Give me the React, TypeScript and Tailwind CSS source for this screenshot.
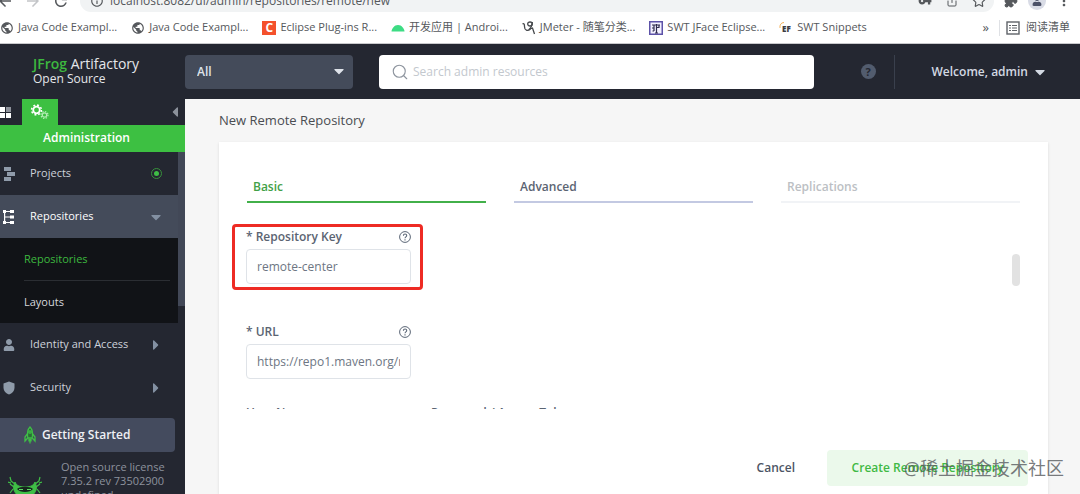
import type { ReactNode } from "react";
import { Puzzle, Search, Share, Star } from "lucide-react";
import { FaCaretDown, FaCaretLeft, FaCaretRight, FaUser } from "react-icons/fa";
import { MdArrowBack, MdArrowForward, MdInfoOutline, MdMoreVert, MdPublic, MdRefresh, MdVpnKey } from "react-icons/md";

type Bookmark = { label: string; icon: ReactNode };

const BOOKMARKS: Bookmark[] = [
  { label: "Java Code Exampl...", icon: <MdPublic className="size-3.5 text-[#55585c]" /> },
  { label: "Java Code Exampl...", icon: <MdPublic className="size-3.5 text-[#55585c]" /> },
  {
    label: "Eclipse Plug-ins R...",
    icon: (
      <span className="flex size-3.5 items-center justify-center bg-[#f4512c] text-[12px] leading-none font-bold text-white">
        C
      </span>
    ),
  },
  { label: "开发应用 | Androi...", icon: <AndroidIcon /> },
  { label: "JMeter - 随笔分类...", icon: <PenIcon /> },
  { label: "SWT JFace Eclipse...", icon: <FrameIcon /> },
  { label: "SWT Snippets", icon: <EfIcon /> },
];

function AndroidIcon() {
  return (
    <svg viewBox="0 0 14 14" className="size-3.5">
      <path d="M.5 10.5C.8 7.500 3.200 4 7 4s6.200 3.500 6.500 6.500z" fill="#3ddc84" />
    </svg>
  );
}

function PenIcon() {
  return (
    <svg viewBox="0 0 14 14" className="size-3.5" fill="none" stroke="#45484c" strokeWidth="1.300">
      <path d="M.5 3c1.500-1 2 .3 2 2.500 0 4 3 5 6 2.500" />
      <ellipse cx="8" cy="3" rx="2.300" ry="2" />
      <path d="M10.300 1c-.5 3 0 5-3.300 7.500M6.500 8.500l4-1.500 2 6" />
    </svg>
  );
}

function FrameIcon() {
  return (
    <svg viewBox="0 0 14 14" className="size-3.5" fill="none">
      <rect x=".75" y=".75" width="12.500" height="12.500" fill="#f3f1ff" stroke="#5d52a8" strokeWidth="1.500" />
      <path d="M3 4h8M5 4v6M7.500 3v9M3 7h2M7.500 6.500H10V4M6 12h3M3.500 10H5" stroke="#2e2a4d" strokeWidth="1.200" />
    </svg>
  );
}

function EfIcon() {
  return (
    <svg viewBox="0 0 14 14" className="size-3.5">
      <path d="M1 7C.5 4 2 1.500 5 1.500" fill="none" stroke="#f5b35c" strokeWidth="1" />
      <text x="3" y="10.500" fontSize="8" fontWeight="800" fill="#3c3c42" fontFamily="Open Sans, sans-serif">
        EF
      </text>
    </svg>
  );
}

function ReadingListIcon() {
  return (
    <svg viewBox="0 0 14 14" className="size-3.5" fill="none" stroke="#5f6368">
      <rect x="1" y="1" width="12" height="12" strokeWidth="1.400" />
      <path d="M3 4.500h2M6 4.500h5M3 7h2M6 7h5M3 9.500h2M6 9.500h5" strokeWidth="1.200" />
    </svg>
  );
}

function GearsIcon() {
  return (
    <svg viewBox="0 0 20 16" className="h-4 w-5" fill="none">
      <circle cx="6.500" cy="6" r="3.300" stroke="#fff" strokeWidth="1.800" />
      <circle cx="6.500" cy="6" r="4.900" stroke="#fff" strokeWidth="1.600" strokeDasharray="1.900 1.950" />
      <circle cx="14.500" cy="11" r="2.200" stroke="#b5ecb6" strokeWidth="1.200" />
      <circle cx="14.500" cy="11" r="3.500" stroke="#b5ecb6" strokeWidth="1.200" strokeDasharray="1.400 1.350" />
    </svg>
  );
}

function ProjectsIcon() {
  return (
    <svg viewBox="0 0 12 16" className="h-4 w-3" fill="#8f9baa">
      <path d="M1 1h7v4H1zM4 6h8v4H4zM1 11h7v4H1z" />
    </svg>
  );
}

function RepositoriesIcon() {
  return (
    <svg viewBox="0 0 12 16" className="h-4 w-3" fill="#fff">
      <path d="M0 1h3v3H0zM7 1h4v3H7zM7 6.500h4v3H7zM7 12h4v3H7zM0 12h3v3H0z" />
      <path d="M1 2h1.200v12H1zM2 2h6v1H2zM2 7.500h6v1H2zM2 13h6v1H2z" />
    </svg>
  );
}

function ShieldIcon() {
  return (
    <svg viewBox="0 0 12 14" className="h-3.5 w-3" fill="#8f9baa">
      <path d="M6 .5l5.500 2v4c0 3.500-2.500 6-5.500 7-3-1-5.500-3.500-5.500-7v-4z" />
    </svg>
  );
}

function RocketIcon() {
  return (
    <svg viewBox="0 0 12 18" className="h-[18px] w-3" fill="none" stroke="#3fbf46" strokeWidth="1.300">
      <path d="M6 1C3.500 3.500 3 7 3.800 12h4.400C9 7 8.500 3.500 6 1z" fill="#2b6b37" />
      <circle cx="6" cy="6" r="1.200" />
      <path d="M3.300 8L1 11v4l2.800-3M8.700 8L11 11v4l-2.800-3M5 12.500v3M7 12.500v3M6 13v4.500" />
    </svg>
  );
}

function FrogIcon() {
  return (
    <svg viewBox="0 0 34 26" className="h-[26px] w-[34px]" fill="none" stroke="#3fbf46">
      <path d="M2 1l1 4 5 4M0 6l3 1M6 11L2 8M32 1l-1 4-5 4M34 6l-3 1M28 11l4-3M5 13l-3 4M29 13l3 4" strokeWidth="1.200" />
      <path d="M7 6c1 3 4 5 10 5s9-2 10-5c1 3 2 5 1 8-2 5-6 9-11 9S8 19 6 14c-1-3 0-5 1-8z" fill="#3fbf46" strokeWidth="1" />
      <path d="M9 13c3-3 13-3 16 0-3 4-13 4-16 0z" fill="#16261d" stroke="none" />
      <path d="M11 13.500h4M19 13.500h4" stroke="#5fd766" strokeWidth="1.200" />
    </svg>
  );
}

function HelpIcon() {
  return (
    <svg viewBox="0 0 12 12" className="size-3" fill="none" stroke="#5b6676">
      <circle cx="6" cy="6" r="5.400" strokeWidth="1" />
      <path d="M4.400 4.700c0-2.200 3.300-2.200 3.300-.1C7.700 5.900 6 5.900 6 7.300M6 8.200v1.200" strokeWidth="1.100" />
    </svg>
  );
}

function BrowserBar() {
  return (
    <div className="shrink-0 bg-white text-[11px] text-[#55585c]">
      <div className="flex h-3 items-end overflow-hidden">
        <div className="flex h-[22px] w-full items-center gap-2.5 pr-2">
          <button aria-label="Back" className="-ml-1">
            <MdArrowBack className="size-[18px]" />
          </button>
          <button aria-label="Forward" className="text-[#c3c5c8]">
            <MdArrowForward className="size-[18px]" />
          </button>
          <button aria-label="Reload">
            <MdRefresh className="size-[18px]" />
          </button>
          <div className="flex h-full flex-1 items-center rounded-full bg-[#f1f3f4] pr-2 pl-2.5">
            <MdInfoOutline className="size-3.5" />
            <input
              aria-label="Address"
              defaultValue="localhost:8082/ui/admin/repositories/remote/new"
              className="ml-1.5 min-w-0 flex-1 bg-transparent text-[12px] text-[#55585c] outline-none"
            />
            <div className="flex items-center gap-3.5">
              <MdVpnKey className="size-3.5" />
              <Share className="size-3" />
              <Star className="size-3.5" />
            </div>
          </div>
          <Puzzle className="size-3.5 fill-current" />
          <span className="flex size-[18px] items-center justify-center rounded-full bg-[#d9dce6]">
            <FaUser className="size-2.5 text-[#4b5168]" />
          </span>
          <MdMoreVert className="size-4" />
        </div>
      </div>
      <div className="flex h-8 items-center border-b border-[#c9c9cc] pr-2.5">
        <nav aria-label="Bookmarks" className="flex items-center gap-3.5">
          {BOOKMARKS.map((b, i) => (
            <a key={i} href="#" className="flex items-center gap-1 whitespace-nowrap">
              {b.icon}
              {b.label}
            </a>
          ))}
        </nav>
        <div className="ml-auto flex items-center gap-1.5 whitespace-nowrap">
          <span className="mr-1 text-[13px]">»</span>
          <span className="h-4 w-px bg-[#dfe1e5]" />
          <ReadingListIcon />
          <span>阅读清单</span>
        </div>
      </div>
    </div>
  );
}

function Header() {
  return (
    <header className="flex h-[55px] shrink-0 items-center bg-[#242731] text-white">
      <div className="w-[185px] shrink-0 pb-0.5 pl-[33px] text-[12px] leading-[15px] text-[#e4e6ea]">
        <div className="text-[14px]">
          <span className="font-semibold text-[#3db83f]">JFrog</span> Artifactory
        </div>
        <div>Open Source</div>
      </div>
      <div className="relative w-[168px] shrink-0">
        <select
          aria-label="Search scope"
          className="h-[34px] w-full appearance-none rounded-sm bg-[#444b5a] px-3 text-[12px] font-semibold text-[#dfe3ea]"
        >
          <option>All</option>
        </select>
        <FaCaretDown className="pointer-events-none absolute top-2 right-1.5 size-4 text-[#dfe3ea]" />
      </div>
      <div className="ml-[26px] flex h-[34px] w-[435px] items-center rounded-sm bg-white px-3">
        <Search className="size-[18px] text-[#8d949e]" strokeWidth={1.5} />
        <input
          aria-label="Search admin resources"
          placeholder="Search admin resources"
          className="ml-1 min-w-0 flex-1 text-[12px] text-[#444b5a] outline-none placeholder:text-[#c3c8ce]"
        />
      </div>
      <div className="ml-auto flex items-center pr-8">
        <button
          aria-label="Help"
          className="mr-[18px] flex size-[15px] items-center justify-center rounded-full bg-[#525c6e] text-[11px] leading-none font-bold text-[#242731]"
        >
          ?
        </button>
        <span className="mr-[37px] h-[34px] w-px bg-[#3a404d]" />
        <button className="flex items-center gap-1 text-[12px] font-semibold text-[#d3d9e3]">
          Welcome, admin
          <FaCaretDown className="size-4" />
        </button>
      </div>
    </header>
  );
}

type MenuItem = { label: string; icon: ReactNode; mark?: ReactNode; active?: boolean; children?: string[] };

const MENU: MenuItem[] = [
  {
    label: "Projects",
    icon: <ProjectsIcon />,
    mark: (
      <span className="flex size-[11px] items-center justify-center rounded-full border border-[#37913b]">
        <span className="size-[5px] rounded-full bg-[#3fbf46]" />
      </span>
    ),
  },
  {
    label: "Repositories",
    icon: <RepositoriesIcon />,
    mark: <FaCaretDown className="size-4 text-[#8390a2]" />,
    active: true,
    children: ["Repositories", "Layouts"],
  },
  {
    label: "Identity and Access",
    icon: <FaUser className="size-3 text-[#8f9baa]" />,
    mark: <FaCaretRight className="size-4 text-[#8390a2]" />,
  },
  {
    label: "Security",
    icon: <ShieldIcon />,
    mark: <FaCaretRight className="size-4 text-[#8390a2]" />,
  },
];

function MenuRow({ item }: { item: MenuItem }) {
  return (
    <li>
      <button
        className={
          item.active
            ? "flex h-[43px] w-full items-center bg-[#444b5a] pr-4 text-white"
            : "flex h-[43px] w-full items-center pr-4 text-[#cdd2da]"
        }
      >
        <span className="ml-[3px] flex w-[27px]">{item.icon}</span>
        <span className="flex-1 text-left">{item.label}</span>
        <span className="flex w-3 justify-center">{item.mark}</span>
      </button>
      {item.children && (
        <ul className="bg-[#111317] pr-2 pl-6">
          {item.children.map((child, i) => (
            <li key={child} className={i === 0 ? "border-b border-[#2b2e33] text-[#3db83f]" : "text-[#d5d8dd]"}>
              <a href="#" className="flex h-[42px] items-center">
                {child}
              </a>
            </li>
          ))}
        </ul>
      )}
    </li>
  );
}

function Sidebar() {
  return (
    <aside className="flex w-[185px] shrink-0 flex-col overflow-hidden bg-[#242731] text-[11px]">
      <div className="flex h-[26px] shrink-0 items-center">
        <button aria-label="Application" className="grid w-[22px] grid-cols-[5px_5px] gap-px">
          <span className="h-[5px] bg-white" />
          <span className="h-[5px] bg-[#8e929b]" />
          <span className="h-[5px] bg-white" />
          <span className="h-[5px] bg-white" />
        </button>
        <button aria-label="Administration" className="flex h-full w-9 items-center justify-center bg-[#3dc042]">
          <GearsIcon />
        </button>
        <button aria-label="Collapse menu" className="mr-0.5 ml-auto text-[#8c919b]">
          <FaCaretLeft className="size-4" />
        </button>
      </div>
      <h2 className="flex h-[27px] shrink-0 items-center justify-center bg-[#3dc042] pr-3 pb-0.5 text-[12px] font-semibold text-white">
        Administration
      </h2>
      <div className="flex shrink-0">
        <ul className="flex-1">
          {MENU.map((item) => (
            <MenuRow key={item.label} item={item} />
          ))}
        </ul>
        <div className="w-[7px]">
          <div className="h-[154px] bg-[#424857]" />
        </div>
      </div>
      <button className="mt-[9px] mr-2.5 flex h-[34px] shrink-0 items-center gap-1.5 rounded-r-sm bg-[#444b5e] pl-6 text-[12px] font-semibold text-[#eef0f4]">
        <RocketIcon />
        Getting Started
      </button>
      <div className="mt-2 flex shrink-0 gap-[18px] pl-2 leading-[14px] text-[#8d929d]">
        <div className="w-[35px] pt-4">
          <FrogIcon />
        </div>
        <div className="whitespace-nowrap">
          Open source license
          <br />
          7.35.2 rev 73502900
          <br />
          undefined
        </div>
      </div>
    </aside>
  );
}

type FieldProps = { id: string; label: string; value?: string; help?: boolean; marked?: boolean };

function Field({ id, label, value, help, marked }: FieldProps) {
  return (
    <div className="relative w-[165px]">
      <div className="flex h-6 items-center justify-between">
        <label htmlFor={id} className="text-[12px] font-semibold whitespace-nowrap text-[#5b6472]">
          {label}
        </label>
        {help && (
          <button type="button" aria-label="Help">
            <HelpIcon />
          </button>
        )}
      </div>
      <input
        id={id}
        defaultValue={value}
        className="h-[35px] w-full rounded-sm border border-[#dfe3e8] px-2.5 text-[12px] text-[#6d7683] outline-none"
      />
      {marked && (
        <div className="pointer-events-none absolute -top-px -right-3 -bottom-1.5 -left-3.5 rounded-sm border-3 border-[#ee2b24]" />
      )}
    </div>
  );
}

const TABS = [
  { label: "Basic", style: "border-[#42b04a] text-[#42a047]" },
  { label: "Advanced", style: "border-[#c3c9e2] text-[#5b6472]" },
  { label: "Replications", style: "border-[#f1f3f6] text-[#bcbfc4]" },
];

function RepositoryForm() {
  return (
    <form className="flex min-h-0 flex-1 flex-col bg-white shadow-sm" onSubmit={(e) => e.preventDefault()}>
      <div role="tablist" className="mt-7 grid grid-cols-3 gap-7 px-7">
        {TABS.map((tab, i) => (
          <button
            key={tab.label}
            type="button"
            role="tab"
            aria-selected={i === 0}
            disabled={i === 2}
            className={`h-[33px] border-b-2 px-1.5 pt-0.5 text-left text-[12px] font-semibold ${tab.style}`}
          >
            {tab.label}
          </button>
        ))}
      </div>
      <div className="mt-[21px] flex h-[185px] shrink-0 overflow-hidden pr-7 pl-3.5">
        <div className="flex-1 pt-px pl-[13px]">
          <Field id="repository-key" label="* Repository Key" value="remote-center" help marked />
          <div className="mt-9">
            <Field id="url" label="* URL" value="https://repo1.maven.org/maven2/" help />
          </div>
          <div className="mt-[22px] flex gap-5">
            <Field id="user-name" label="User Name" />
            <Field id="password" label="Password / Access Token" />
          </div>
        </div>
        <div className="mt-[30px] h-8 w-2 rounded-full bg-[#e2e2e2]" />
      </div>
      <div className="mt-auto mb-2 flex items-center justify-end gap-8 pr-5 text-[12px] font-semibold">
        <button type="button" className="text-[#4c5564]">
          Cancel
        </button>
        <button type="submit" className="h-9 w-[201px] rounded-sm bg-[#ebf9eb] text-[#3fb944]">
          Create Remote Repository
        </button>
      </div>
    </form>
  );
}

export default function App() {
  return (
    <div className="relative flex h-screen flex-col overflow-hidden bg-[#f6f6f6] font-['Open_Sans','Noto_Sans_CJK_SC',sans-serif]">
      <BrowserBar />
      <Header />
      <div className="flex min-h-0 flex-1">
        <Sidebar />
        <main className="flex min-w-0 flex-1 flex-col pr-8 pl-[34px]">
          <h1 className="flex h-[43px] shrink-0 items-center text-[13px] text-[#4a4d52]">New Remote Repository</h1>
          <RepositoryForm />
        </main>
      </div>
      <div className="pointer-events-none absolute right-4 bottom-3.5 text-[18px] leading-6 text-[#55585c]/80">
        @稀土掘金技术社区
      </div>
    </div>
  );
}
